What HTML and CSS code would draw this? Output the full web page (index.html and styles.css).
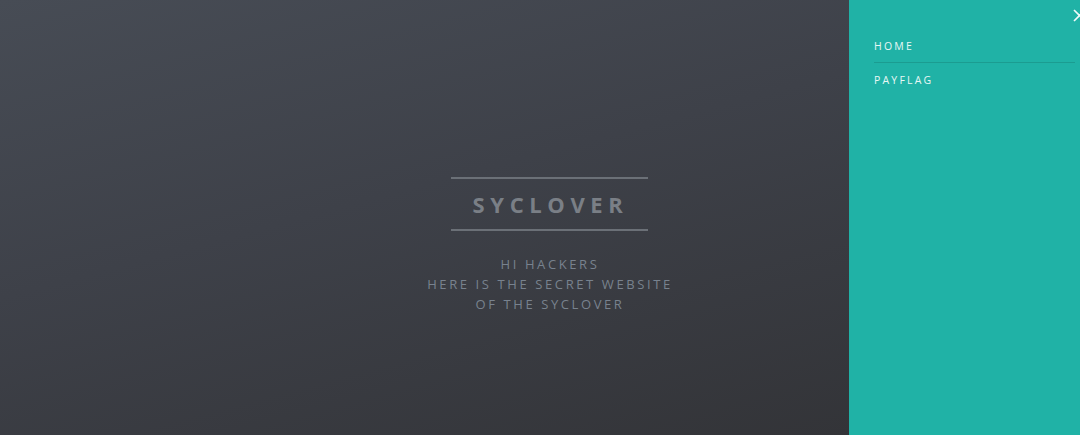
FILE: index.html
```html
<!DOCTYPE html>
<html>
<head>
<meta charset="utf-8">
<link rel="stylesheet" href="styles.css">
</head>
<body>
<div class="page">
  <main class="main">
    <div class="hero">
      <div class="brand">
        <h1 class="title">SYCLOVER</h1>
      </div>
      <p class="intro">HI HACKERS<br>HERE IS THE SECRET WEBSITE<br>OF THE SYCLOVER</p>
    </div>
  </main>
  <aside class="sidebar">
    <svg class="close" width="14" height="14" viewBox="0 0 14 14"><path d="M1 1 L12 12 M12 1 L1 12" stroke="#f2fbfa" stroke-width="1.6" fill="none"/></svg>
    <nav class="menu">
      <a class="menu-item first" href="#">HOME</a>
      <a class="menu-item" href="#">PAYFLAG</a>
    </nav>
  </aside>
</div>
</body>
</html>
```
FILE: styles.css
```css
html, body {
  margin: 0;
  padding: 0;
  height: 100%;
}
body {
  font-family: "Open Sans", "Liberation Sans", sans-serif;
  overflow: hidden;
}
.page {
  display: flex;
  width: 1080px;
  height: 435px;
}
.main {
  width: 849px;
  flex: none;
  display: flex;
  justify-content: center;
  padding-left: 251px;
  box-sizing: border-box;
  background: linear-gradient(165deg, #474c55 0%, #3e4149 45%, #333438 100%);
}
.hero {
  display: flex;
  flex-direction: column;
  align-items: center;
  padding-top: 177px;
}
.brand {
  width: 197px;
  border-top: 2px solid #6b7077;
  border-bottom: 2px solid #6b7077;
  display: flex;
  justify-content: center;
}
.title {
  margin: 0;
  font-size: 22px;
  font-weight: 700;
  letter-spacing: 5.6px;
  color: #7a7f86;
  line-height: 50px;
  padding-left: 1px;
}
.intro {
  margin: 23px 0 0;
  font-size: 13px;
  line-height: 20px;
  letter-spacing: 2.6px;
  color: #78828e;
  text-align: center;
  white-space: nowrap;
}
.sidebar {
  position: relative;
  flex: 1;
  background: #20b2a6;
  overflow: hidden;
}
.close {
  position: absolute;
  left: 224px;
  top: 9px;
}
.menu {
  display: flex;
  flex-direction: column;
  padding: 34px 5px 0 25px;
}
.menu-item {
  display: block;
  font-size: 10.5px;
  letter-spacing: 2.2px;
  color: #e8f7f5;
  text-decoration: none;
  line-height: 24px;
  padding-bottom: 4px;
}
.menu-item.first {
  border-bottom: 1px solid #1b9c91;
  padding-bottom: 4px;
  margin-bottom: 5px;
}
```
